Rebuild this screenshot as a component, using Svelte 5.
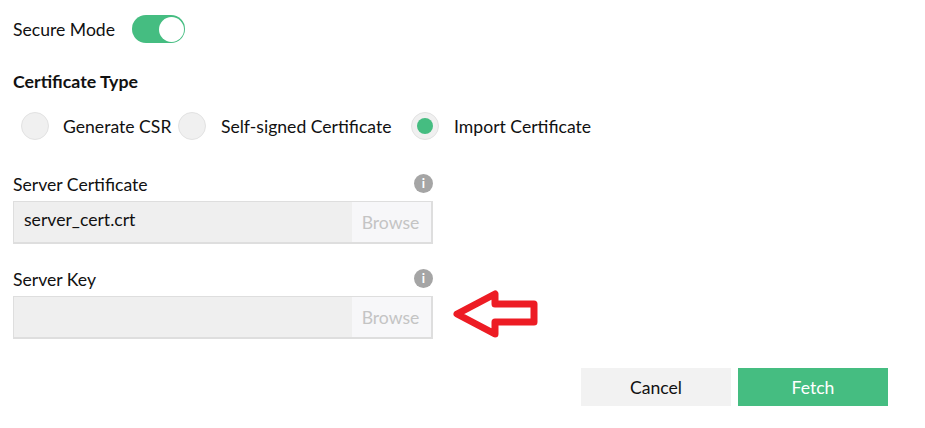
<script>
  const radios = [
    { label: 'Generate CSR', checked: false },
    { label: 'Self-signed Certificate', checked: false },
    { label: 'Import Certificate', checked: true }
  ];
  const files = [
    { label: 'Server Certificate', value: 'server_cert.crt' },
    { label: 'Server Key', value: '' }
  ];
</script>

<div class="page">
  <div class="secure">
    <span>Secure Mode</span>
    <span class="toggle"><span class="knob"></span></span>
  </div>
  <h3>Certificate Type</h3>
  <div class="radios">
    {#each radios as r}
      <div class="radio-item">
        <span class="radio">{#if r.checked}<span class="dot"></span>{/if}</span>
        <span class="radio-label">{r.label}</span>
      </div>
    {/each}
  </div>
  <div class="fields">
    {#each files as f}
      <div class="field">
        <div class="field-head">
          <span>{f.label}</span>
          <span class="info">i</span>
        </div>
        <div class="file">
          <span class="value">{f.value}</span>
          <span class="browse">Browse</span>
        </div>
      </div>
    {/each}
    <svg class="arrow" width="90" height="52" viewBox="0 0 90 52">
      <path d="M7 26 L45 6 L45 16 L84 16 L84 34 L45 34 L45 46 Z" fill="#fff" stroke="#ed1c24" stroke-width="7" stroke-linejoin="round"/>
    </svg>
  </div>
  <div class="actions">
    <button class="cancel">Cancel</button>
    <button class="fetch">Fetch</button>
  </div>
</div>

<style>
  :global(body) { margin: 0; background: #fff; }
  .page {
    width: 925px; height: 428px; box-sizing: border-box; overflow: hidden;
    padding: 15px 0 0 13px;
    font-family: Lato, "Liberation Sans", sans-serif; font-size: 17.6px; color: #111;
  }
  .secure { display: flex; align-items: center; gap: 17px; height: 28px; }
  .toggle { width: 53px; height: 28px; border-radius: 14px; background: #45bd81; display: flex; justify-content: flex-end; align-items: center; padding-right: 1px; box-sizing: border-box; }
  .knob { width: 25px; height: 25px; border-radius: 50%; background: #fff; }
  h3 { margin: 27px 0 0; font-size: 17.75px; line-height: 22px; font-weight: 700; }
  .radios { display: flex; margin: 20px 0 0 8px; height: 28px; align-items: center; }
  .radio-item { display: flex; align-items: center; gap: 15px; margin-right: 6.5px; }
  .radio-item:first-child { gap: 14px; }
  .radio-item:nth-child(2) { margin-right: 19.5px; }
  .radio { width: 28px; height: 28px; box-sizing: border-box; border-radius: 50%; background: #f0f0f0; border: 1px solid #e2e2e2; display: flex; align-items: center; justify-content: center; }
  .dot { width: 16px; height: 16px; border-radius: 50%; background: #45bd81; }
  .fields { position: relative; width: 420px; margin-top: 33px; }
  .field { margin-bottom: 24px; }
  .field-head { display: flex; justify-content: space-between; align-items: center; height: 22px; margin-bottom: 6px; }
  .info { width: 19px; height: 19px; border-radius: 50%; background: #a5a5a5; color: #fff; font-size: 13px; font-weight: 700; text-align: center; line-height: 19px; margin-top: -1px; }
  .file { display: flex; height: 43px; box-sizing: border-box; border: 2px solid #dedede; border-left-width: 1px; border-top-width: 1px; background: #efefef; }
  .value { flex: 1; padding: 7px 0 0 10px; }
  .browse { width: 79px; padding-right: 2px; box-sizing: border-box; background: #f7f7f9; color: #c4c4c4; text-align: center; line-height: 41px; }
  .arrow { position: absolute; left: 437px; top: 115px; }
  .actions { display: flex; gap: 7px; margin: 29px 0 0 568px; }
  button { width: 150px; height: 38px; border: 0; padding: 0; font: inherit; }
  .cancel { background: #f2f2f2; color: #111; }
  .fetch { background: #45bd81; color: #fff; }
</style>
